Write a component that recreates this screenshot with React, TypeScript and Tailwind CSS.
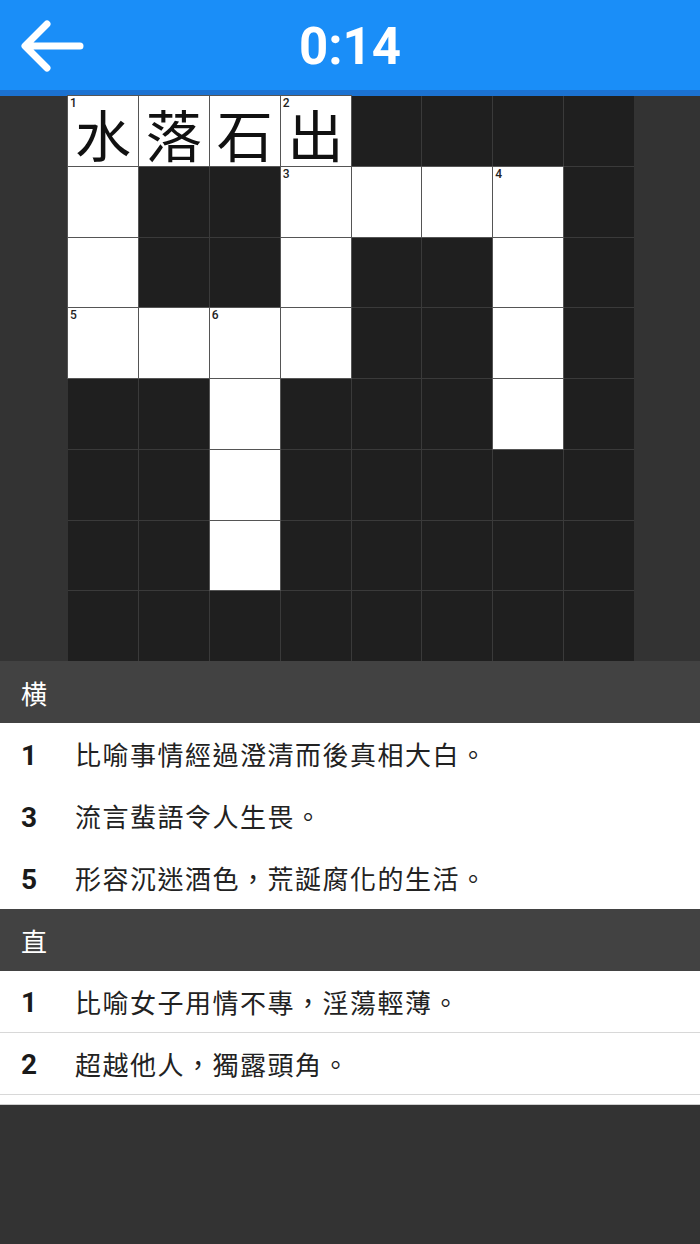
import React from "react";

type Cell = { w: boolean; n?: number; ch?: string };

const layout = [
  "WWWWDDDD",
  "WDDWWWWD",
  "WDDWDDWD",
  "WWWWDDWD",
  "DDWDDDWD",
  "DDWDDDDD",
  "DDWDDDDD",
  "DDDDDDDD",
];

const nums: Record<string, number> = { "0-0": 1, "0-3": 2, "1-3": 3, "1-6": 4, "3-0": 5, "3-2": 6 };
const chars: Record<string, string> = { "0-0": "水", "0-1": "落", "0-2": "石", "0-3": "出" };

const cjk = { fontFamily: '"Noto Sans CJK TC", "Noto Sans CJK SC", sans-serif' };
const roboto = { fontFamily: 'Roboto, "Liberation Sans", sans-serif' };

function Clue({ n, text, line }: { n: number; text: string; line?: boolean }) {
  return (
    <div className={`flex h-[62px] items-center bg-white ${line ? "border-b border-[#d8d8d8]" : ""}`}>
      <span className="w-[75px] shrink-0 pl-[21px] pt-[3px] text-[28px] font-bold leading-none text-[#1a1a1a]" style={roboto}>
        {n}
      </span>
      <span className="text-[26px] leading-none tracking-[1.5px] text-[#222]" style={cjk}>
        {text}
      </span>
    </div>
  );
}

function Header({ text }: { text: string }) {
  return (
    <div className="flex h-[62px] items-center bg-[#424242] pl-[21px] text-[26px] text-white" style={cjk}>
      {text}
    </div>
  );
}

export default function App() {
  const cells: Cell[][] = layout.map((row, r) =>
    row.split("").map((c, col) => ({ w: c === "W", n: nums[`${r}-${col}`], ch: chars[`${r}-${col}`] }))
  );
  return (
    <div className="flex min-h-[1244px] w-[700px] flex-col bg-[#333333]">
      <div className="relative flex h-[90px] items-center justify-center bg-[#1a8ef8] pt-[5px]">
        <svg className="absolute left-[18px] top-[17px]" width="68" height="58" viewBox="0 0 68 58" fill="none">
          <path d="M62 29H8M29 7L7 29L29 51" stroke="white" strokeWidth="7" strokeLinecap="round" strokeLinejoin="round" />
        </svg>
        <span className="text-[51px] font-bold text-white" style={roboto}>
          0:14
        </span>
      </div>
      <div className="h-[6px] bg-[#1b72d2]" />
      <div className="flex justify-center bg-[#333333] pl-[2px]">
        <div className="grid w-[566px] grid-cols-8 gap-[1px] bg-[#3a3a3a]">
          {cells.flat().map((c, i) => (
            <div
              key={i}
              className={`relative h-[69.75px] ${c.w ? "bg-white outline outline-1 outline-[#555]" : "bg-[#1f1f1f]"}`}
            >
              {c.n && (
                <span className="absolute left-[2px] top-[1px] text-[12px] font-medium leading-none text-[#222]" style={roboto}>
                  {c.n}
                </span>
              )}
              {c.ch && (
                <div className="flex h-full items-center justify-center pt-[4px] text-[56px] leading-none text-[#111]" style={cjk}>
                  {c.ch}
                </div>
              )}
            </div>
          ))}
        </div>
      </div>
      <Header text="横" />
      <Clue n={1} text="比喻事情經過澄清而後真相大白。" />
      <Clue n={3} text="流言蜚語令人生畏。" />
      <Clue n={5} text="形容沉迷酒色，荒誕腐化的生活。" />
      <Header text="直" />
      <Clue n={1} text="比喻女子用情不專，淫蕩輕薄。" line />
      <Clue n={2} text="超越他人，獨露頭角。" line />
      <div className="h-[10px] border-b border-[#d0d0d0] bg-white" />
      <div className="flex-1 bg-[#333333]" />
    </div>
  );
}
